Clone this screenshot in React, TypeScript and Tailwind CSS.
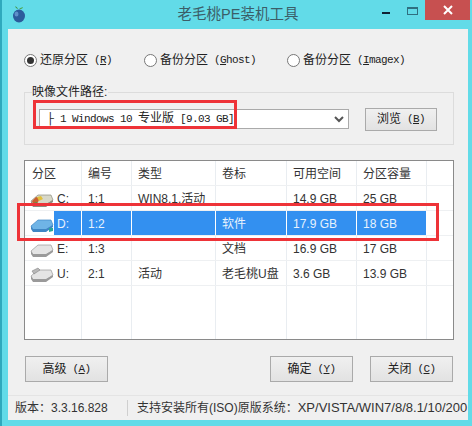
import React from "react";

const cjk = "font-['Liberation_Sans','Noto_Sans_CJK_SC',sans-serif]";
const mono = "font-['Liberation_Mono','Noto_Sans_CJK_SC',monospace]";
const hotText = "text-[11px] tracking-[-0.6px]";

function Drive({ tone }: { tone: "c" | "d" | "e" | "u" }) {
  const top = tone === "d" ? "#6fb4e6" : tone === "c" ? "#d8d8c8" : "#e4e4e4";
  const side = tone === "d" ? "#3f86c4" : tone === "c" ? "#8d8d80" : "#9a9a9a";
  return (
    <svg width="24" height="18" viewBox="0 0 24 18" className="shrink-0">
      <path d="M1 10 L8 4 H21 L23 9 L16 14 H3 Z" fill={top} stroke={side} strokeWidth="0.7" />
      <path d="M1 10 V13 L3 16 H16 L23 11 V9 L16 13 H3 Z" fill={side} />
      {tone === "c" && <path d="M2 10 L6 6 L10 7 L7 13 H3 Z" fill="#c9602f" />}
      {tone === "c" && <path d="M7 6 L11 5 L13 8 L9 10 Z" fill="#e2c03c" />}
      {tone === "c" && <path d="M3 12 L7 11 L8 14 H4 Z" fill="#4d9a4a" />}
      {tone === "d" && <path d="M19 12 L23 12 L23 15 L19 16 Z" fill="#2aa79a" />}
      {tone === "u" && <path d="M2 5 L8 2 L10 4 L4 8 Z" fill="#b8b8b8" stroke="#777" strokeWidth="0.5" />}
    </svg>
  );
}

function Radio({ checked, label, hot, rest }: { checked?: boolean; label: string; hot: string; rest: string }) {
  return (
    <div className="flex items-center">
      <span className="w-[13px] h-[13px] rounded-full border border-[#777] bg-white flex items-center justify-center mr-[3px]">
        {checked && <span className="w-[7px] h-[7px] rounded-full bg-[#333]" />}
      </span>
      <span className={`${cjk} text-[12px] leading-[14px] text-[#222] whitespace-pre`}>{label}</span>
      <span className={`${mono} ${hotText} leading-[14px] text-[#222] whitespace-pre`}>
        {" ("}<span className="underline">{hot}</span>{rest})
      </span>
    </div>
  );
}

function Btn({ label, hot, w, h }: { label: string; hot: string; w: string; h: string }) {
  return (
    <div className={`${w} ${h} border border-[#aaa] bg-gradient-to-b from-[#f0f0f0] to-[#e2e2e2] flex items-center justify-center`}>
      <span className={`${cjk} text-[12px] text-[#222] whitespace-pre`}>{label}</span>
      <span className={`${mono} ${hotText} text-[#222] whitespace-pre`}>
        {" ("}<span className="underline">{hot}</span>)
      </span>
    </div>
  );
}

const widths = ["w-[57px]", "w-[50px]", "w-[84px]", "w-[71px]", "w-[70px]", "w-[70px]", "flex-1"];

function Row({ cells, tone, selected }: { cells: string[]; tone?: "c" | "d" | "e" | "u"; selected?: boolean }) {
  return (
    <div className="flex h-[25px] border-b border-[#eef0f2]">
      {widths.map((w, i) => (
        <div
          key={i}
          className={`${w} shrink-0 h-full flex items-center relative ${i < 6 ? "border-r border-[#e9edf1]" : ""} ${
            selected && i < 6 ? "border-r-white" : ""
          }`}
        >
          {selected && i < 6 && <div className={`absolute inset-y-0 right-0 ${i === 0 ? "left-[29px]" : "left-0"} bg-[#3390f0]`} />}
          {i === 0 && tone && (
            <span className="absolute left-[5px] top-[5px]">
              <Drive tone={tone} />
            </span>
          )}
          {cells[i] && (
            <span
              className={`relative top-[1px] ${cjk} text-[12px] whitespace-nowrap ${selected ? "text-[#e8f2fd]" : "text-[#333]"} ${
                i === 0 && tone ? "pl-[32px]" : i === 0 ? "pl-[7px]" : "pl-[6px]"
              }`}
            >
              {cells[i]}
            </span>
          )}
        </div>
      ))}
    </div>
  );
}

export default function App() {
  return (
    <div className={`relative w-[472px] h-[426px] bg-[#62dbe8] overflow-hidden flex flex-col ${cjk}`}>
      <div className="absolute left-0 top-0 bottom-0 w-[2px] bg-[#2fa9bd]" />

      {/* title bar */}
      <div className="h-[29px] shrink-0 relative flex items-center justify-center">
        <svg width="14" height="18" viewBox="0 0 14 18" className="absolute left-[12px] top-[5px]">
          <path d="M6 4 C5 2 4 1.5 3 1.5 C4 3 5 4 6 4 Z" fill="#3f8f3a" />
          <path d="M7 4 C9 3 10 2 11 2.5 C10 4 8 4.5 7 4 Z" fill="#4da343" />
          <ellipse cx="7" cy="11" rx="6" ry="6.5" fill="#2c5c9c" />
          <ellipse cx="4.5" cy="9" rx="2" ry="2.5" fill="#5f8fc9" />
        </svg>
        <span className={`${cjk} text-[14.5px] text-[#3b5e68] relative left-[2px]`}>老毛桃PE装机工具</span>
        <div className="absolute right-[82px] top-[12px] w-[8px] h-[2px] bg-[#123]" />
        <div className="absolute right-[54px] top-[7px] w-[11px] h-[8px] border border-[#2f6f80] border-t-2" />
        <div className="absolute right-[2px] top-0 w-[45px] h-[20px] bg-[#c75050] flex items-center justify-center">
          <svg width="10" height="10" viewBox="0 0 10 10">
            <path d="M1 1 L9 9 M9 1 L1 9" stroke="#fff" strokeWidth="2" />
          </svg>
        </div>
      </div>

      {/* client */}
      <div className="ml-[8px] mr-[4px] h-[391px] bg-[#f0f0f0] flex flex-col">
        <div className="flex items-center pl-[16px] pt-[25px] h-[37px]">
          <div className="w-[120px]">
            <Radio checked label="还原分区" hot="R" rest="" />
          </div>
          <div className="w-[143px]">
            <Radio label="备份分区" hot="G" rest="host" />
          </div>
          <Radio label="备份分区" hot="I" rest="magex" />
        </div>

        {/* group */}
        <div className="relative ml-[16px] w-[430px] h-[53px] mt-[26px] border border-[#dcdcdc] flex items-center pl-[14px] pt-[1px]">
          <span className={`absolute left-[7px] top-[-9px] bg-[#f0f0f0] ${cjk} text-[12px] leading-[16px] text-[#222] pr-[1px]`}>
            映像文件路径:
          </span>
          <div className="w-[310px] h-[20px] bg-white border border-[#aaa] flex items-center justify-between pl-[2px] pr-[4px]">
            <span className={`${mono} ${hotText} text-[#222] whitespace-pre flex items-center`}>
              <span className="inline-block w-[12px] text-[12px] text-right tracking-normal">├</span>
              {" 1 Windows 10 "}
              <span className="text-[12px] tracking-normal">专业版</span>
              {" [9.03 GB]"}
            </span>
            <svg width="10" height="7" viewBox="0 0 10 7">
              <path d="M1 1 L5 5 L9 1" fill="none" stroke="#555" strokeWidth="2" />
            </svg>
          </div>
          <div className="ml-[16px]">
            <Btn label="浏览" hot="B" w="w-[72px]" h="h-[23px]" />
          </div>
        </div>

        {/* list */}
        <div className="ml-[16px] w-[430px] h-[180px] mt-[15px] bg-white border border-[#8a8a8a] overflow-hidden flex flex-col">
          <Row cells={["分区", "编号", "类型", "卷标", "可用空间", "分区容量"]} />
          <Row tone="c" cells={["C:", "1:1", "WIN8.1.活动", "", "14.9 GB", "25 GB"]} />
          <Row tone="d" selected cells={["D:", "1:2", "", "软件", "17.9 GB", "18 GB"]} />
          <Row tone="e" cells={["E:", "1:3", "", "文档", "16.9 GB", "17 GB"]} />
          <Row tone="u" cells={["U:", "2:1", "活动", "老毛桃U盘", "3.6 GB", "13.9 GB"]} />
          <div className="flex flex-1">
            {widths.map((w, i) => (
              <div key={i} className={`${w} shrink-0 ${i < 6 ? "border-r border-[#e9edf1]" : ""}`} />
            ))}
          </div>
        </div>

        {/* buttons */}
        <div className="flex ml-[17px] mt-[16px]">
          <Btn label="高级" hot="A" w="w-[83px]" h="h-[26px]" />
          <div className="ml-[162px]">
            <Btn label="确定" hot="Y" w="w-[83px]" h="h-[26px]" />
          </div>
          <div className="ml-[17px]">
            <Btn label="关闭" hot="C" w="w-[83px]" h="h-[26px]" />
          </div>
        </div>

        {/* status */}
        <div className="mt-[13px] flex-1 border-t border-[#e4e4e4] flex items-center overflow-hidden">
          <div className="w-[120px] shrink-0 h-[16px] border-r border-[#cfcfcf] pl-[7px] flex items-center">
            <span className={`${cjk} text-[12px] text-[#333] whitespace-nowrap`}>{"版本\uFF1A3.3.16.828"}</span>
          </div>
          <span className={`${cjk} text-[12px] text-[#333] whitespace-nowrap pl-[9px]`}>
            {"支持安装所有(ISO)原版系统\uFF1A"}
            <span className="text-[13px]">XP/VISTA/WIN7/8/8.1/10/200</span>
          </span>
        </div>
      </div>

      {/* red annotation frames */}
      <div className="absolute left-[33px] top-[100px] w-[204px] h-[29px] border-[3px] border-[#ee3338]" />
      <div className="absolute left-[17px] top-[203px] w-[422px] h-[38px] border-[3px] border-[#ee3338]" />
    </div>
  );
}
